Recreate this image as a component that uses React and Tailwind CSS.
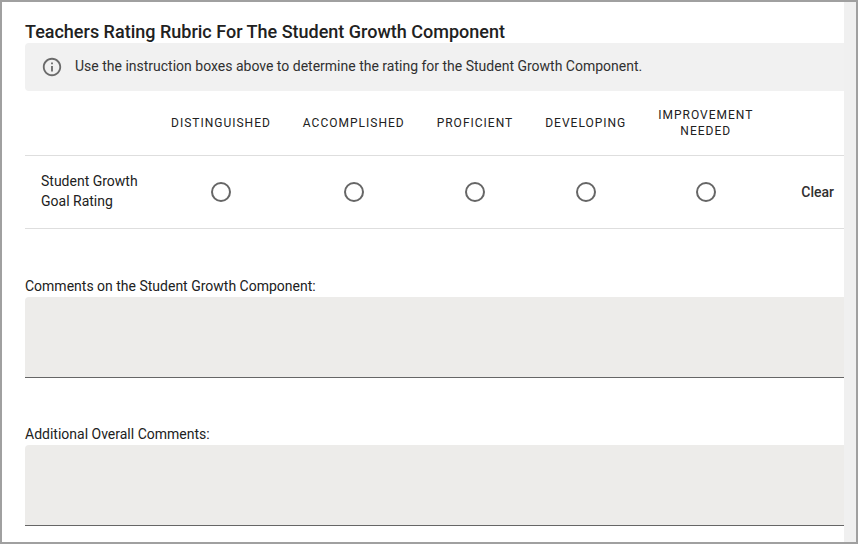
import { useState } from "react";
import { MdOutlineInfo } from "react-icons/md";

const RATINGS = ["Distinguished", "Accomplished", "Proficient", "Developing", "Improvement Needed"];

function Notice({ children }) {
  return (
    <div className="flex items-center gap-3 rounded-l bg-[#f1f1f1] px-4 py-[13px]">
      <MdOutlineInfo className="size-[22px] shrink-0 text-[#6b6b6b]" aria-hidden="true" />
      <p className="pb-0.5 leading-5 text-[#303030]">{children}</p>
    </div>
  );
}

function RatingTable() {
  const [rating, setRating] = useState(null);
  return (
    <table className="w-full border-collapse">
      <thead>
        <tr className="h-16 border-b border-[#dedede]">
          <td className="w-[130px]" />
          {RATINGS.map((name) => (
            <th
              key={name}
              scope="col"
              className="w-px px-4 text-center text-xs leading-4 font-normal tracking-[1px] uppercase"
            >
              {name}
            </th>
          ))}
          <td />
        </tr>
      </thead>
      <tbody>
        <tr className="h-[73px] border-b border-[#dedede]">
          <th scope="row" className="px-4 pb-0.5 text-left leading-5 font-normal">
            Student Growth Goal Rating
          </th>
          {RATINGS.map((name) => (
            <td key={name} className="px-4 text-center">
              <input
                type="radio"
                name="growth-rating"
                aria-label={name}
                checked={rating === name}
                onChange={() => setRating(name)}
                className="mx-auto block size-5 appearance-none rounded-full border-2 border-[#666666] bg-white checked:border-[6px]"
              />
            </td>
          ))}
          <td className="pr-[10px] text-right">
            <button type="button" onClick={() => setRating(null)} className="font-medium text-[#303030]">
              Clear
            </button>
          </td>
        </tr>
      </tbody>
    </table>
  );
}

function CommentField({ id, label }) {
  return (
    <div className="flex flex-col">
      <label htmlFor={id} className="pb-px leading-5">
        {label}
      </label>
      <textarea
        id={id}
        className="block h-[81px] w-full resize-none rounded-tl border-b border-[#666666] bg-[#edecea] p-3 outline-none"
      />
    </div>
  );
}

export default function App() {
  return (
    <div className="flex min-h-screen flex-col border-2 border-[#a0a0a0] bg-[#f0f0f0] pr-3 font-['Roboto',sans-serif] text-sm text-[#212121]">
      <main className="grow bg-white pt-[18px] pb-4 pl-[23px]">
        <h1 className="text-lg leading-[23px] font-medium">
          Teachers Rating Rubric For The Student Growth Component
        </h1>
        <Notice>Use the instruction boxes above to determine the rating for the Student Growth Component.</Notice>
        <RatingTable />
        <div className="flex flex-col gap-[46px] pt-[47px]">
          <CommentField id="growth-comments" label="Comments on the Student Growth Component:" />
          <CommentField id="overall-comments" label="Additional Overall Comments:" />
        </div>
      </main>
    </div>
  );
}
